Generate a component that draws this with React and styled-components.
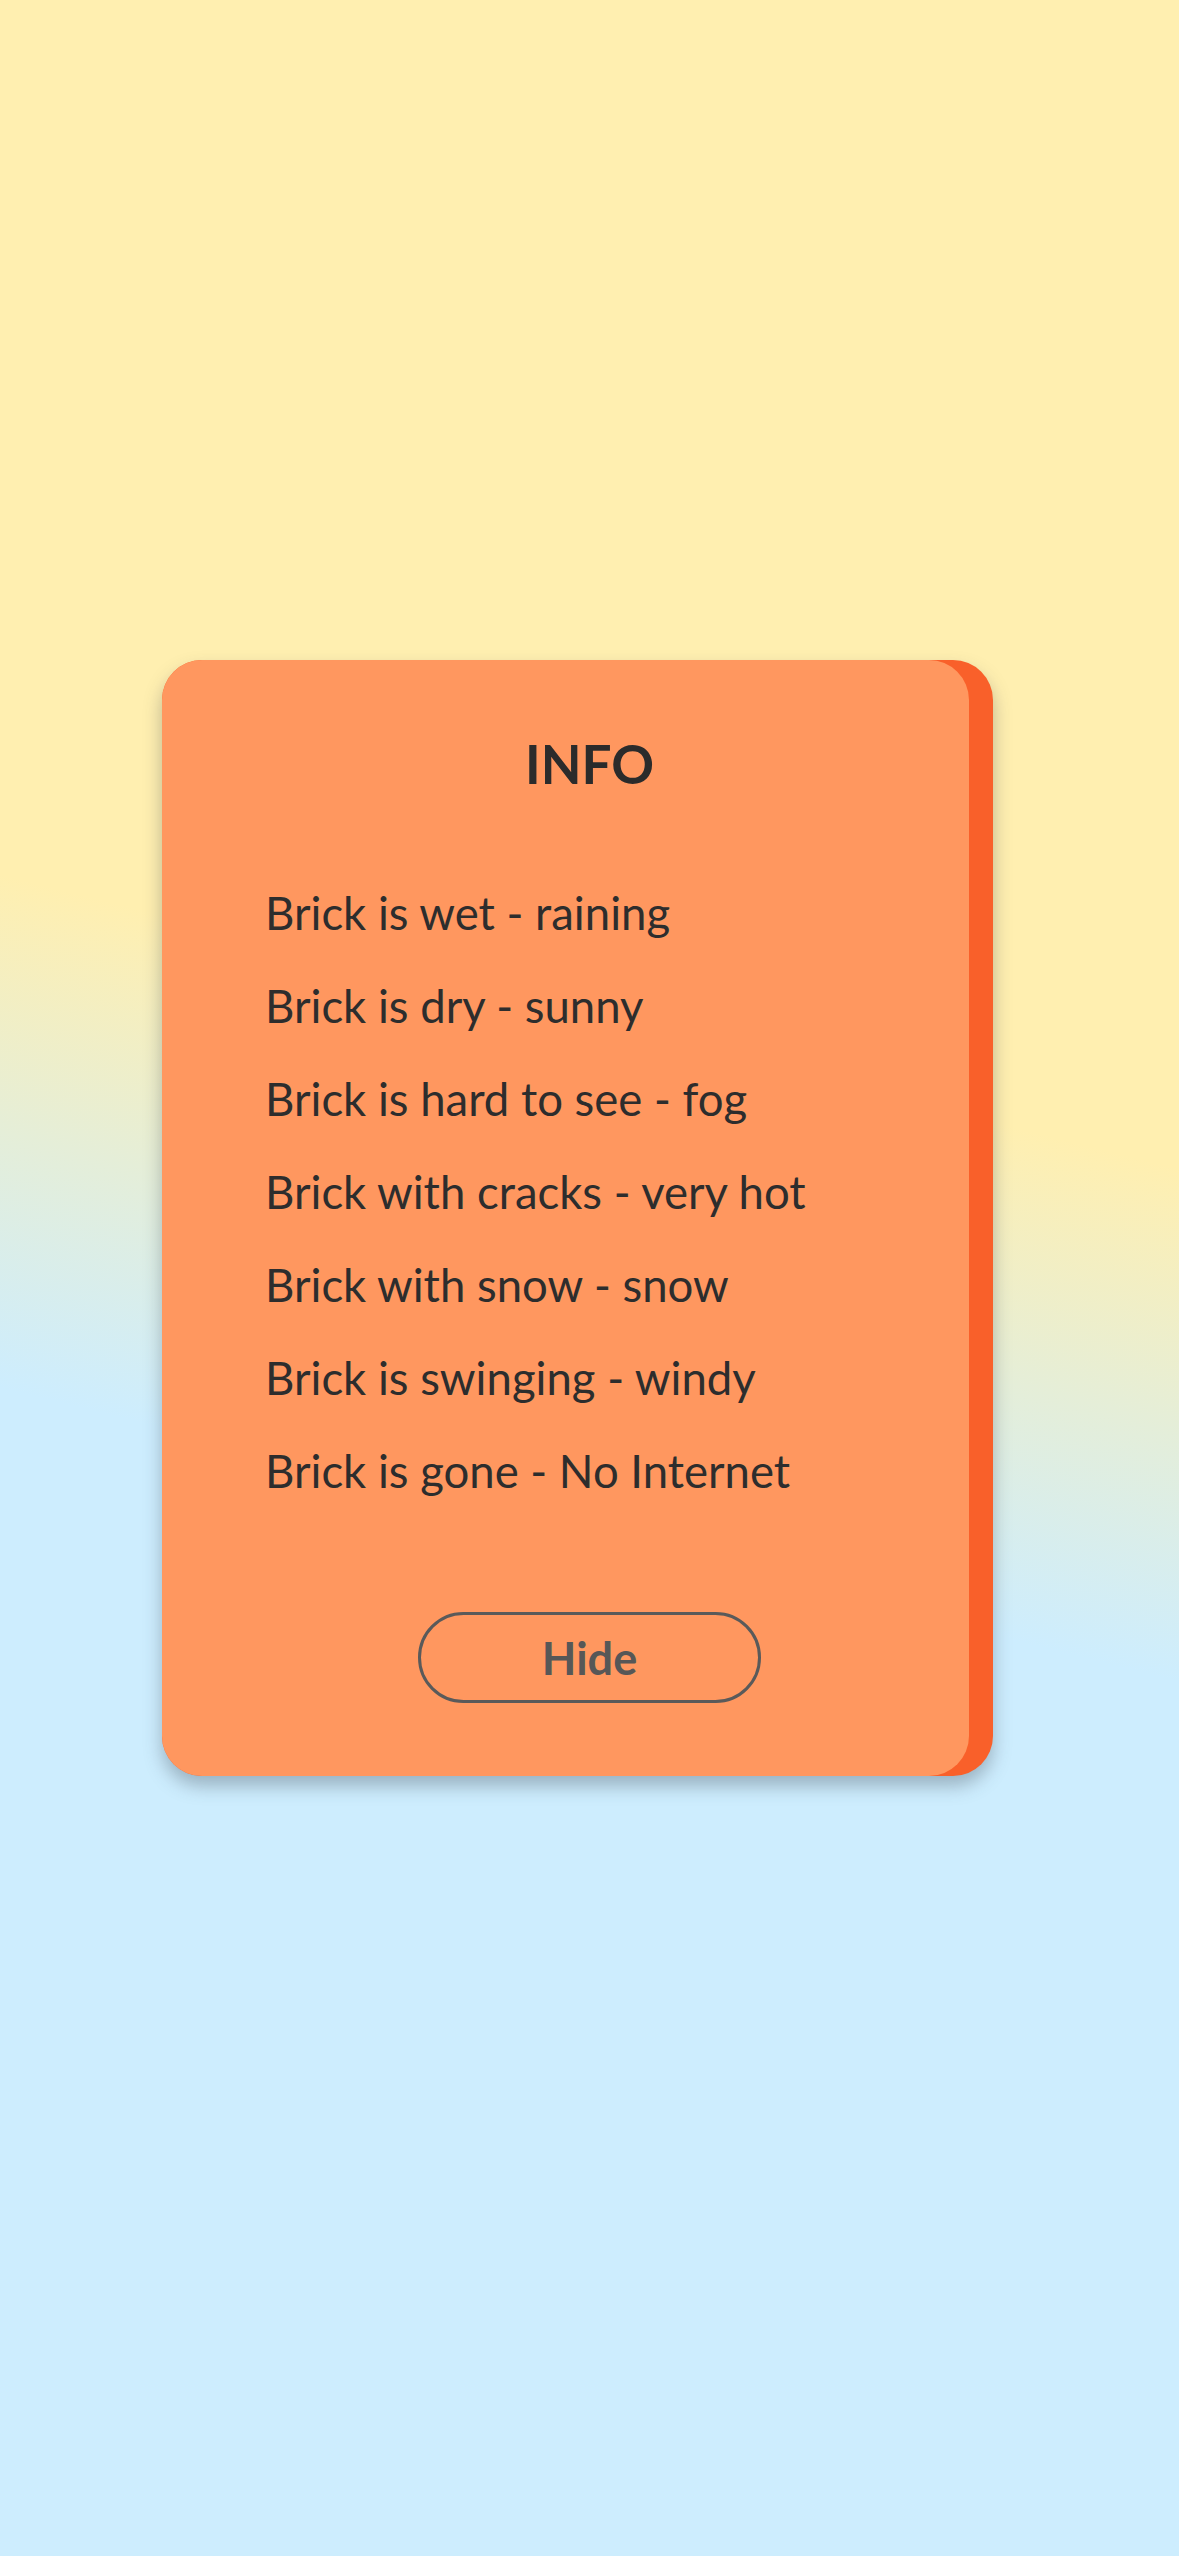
import React from 'react';
import styled, { createGlobalStyle } from 'styled-components';

const GlobalStyle = createGlobalStyle`
  html, body {
    margin: 0;
    padding: 0;
  }
  body {
    font-family: Lato, 'Open Sans', sans-serif;
  }
`;

const Screen = styled.div`
  width: 1179px;
  height: 2556px;
  display: flex;
  align-items: flex-start;
  justify-content: flex-start;
  padding: 660px 0 0 162px;
  box-sizing: border-box;
  background: linear-gradient(194deg, #ffefb0 41%, #e5eed8 50%, #cdedfe 59%);
`;

// the dark orange strip on the right is the back sheet peeking out
const CardBack = styled.div`
  display: flex;
  width: 831px;
  padding-right: 24px;
  box-sizing: border-box;
  background: #f9602a;
  border-radius: 40px;
  box-shadow: 0 10px 18px rgba(60, 70, 80, 0.35);
`;

const Card = styled.div`
  flex: 1;
  display: flex;
  flex-direction: column;
  align-items: stretch;
  padding: 74px 55px 73px 103px;
  background: #ff975f;
  border-radius: 40px;
`;

const Title = styled.h1`
  margin: 0;
  font-size: 53px;
  line-height: 60px;
  font-weight: 700;
  color: #2b2b2b;
  text-align: center;
`;

const List = styled.ul`
  list-style: none;
  margin: 72px 0 0;
  padding: 0;
`;

const Item = styled.li`
  font-size: 45.5px;
  line-height: 93px;
  color: #2d2d2d;
  white-space: nowrap;
`;

const ButtonRow = styled.div`
  display: flex;
  justify-content: center;
  margin-top: 95px;
`;

const Button = styled.button`
  width: 343px;
  height: 91px;
  border: 3px solid #5a5a5a;
  border-radius: 46px;
  background: transparent;
  color: #575757;
  font-family: Lato, 'Open Sans', sans-serif;
  font-weight: 700;
  font-size: 45px;
  padding: 0;
  cursor: pointer;
`;

const rules = [
  'Brick is wet - raining',
  'Brick is dry - sunny',
  'Brick is hard to see - fog',
  'Brick with cracks - very hot',
  'Brick with snow - snow',
  'Brick is swinging - windy',
  'Brick is gone - No Internet',
];

const App = () => {
  const [open, setOpen] = React.useState(true);

  return (
    <>
      <GlobalStyle />
      <Screen>
        {open && (
          <CardBack>
            <Card>
              <Title>INFO</Title>
              <List>
                {rules.map((r, idx) => (
                  <Item key={idx}>{r}</Item>
                ))}
              </List>
              <ButtonRow>
                <Button onClick={() => setOpen(false)}>Hide</Button>
              </ButtonRow>
            </Card>
          </CardBack>
        )}
      </Screen>
    </>
  );
};

export default App;
